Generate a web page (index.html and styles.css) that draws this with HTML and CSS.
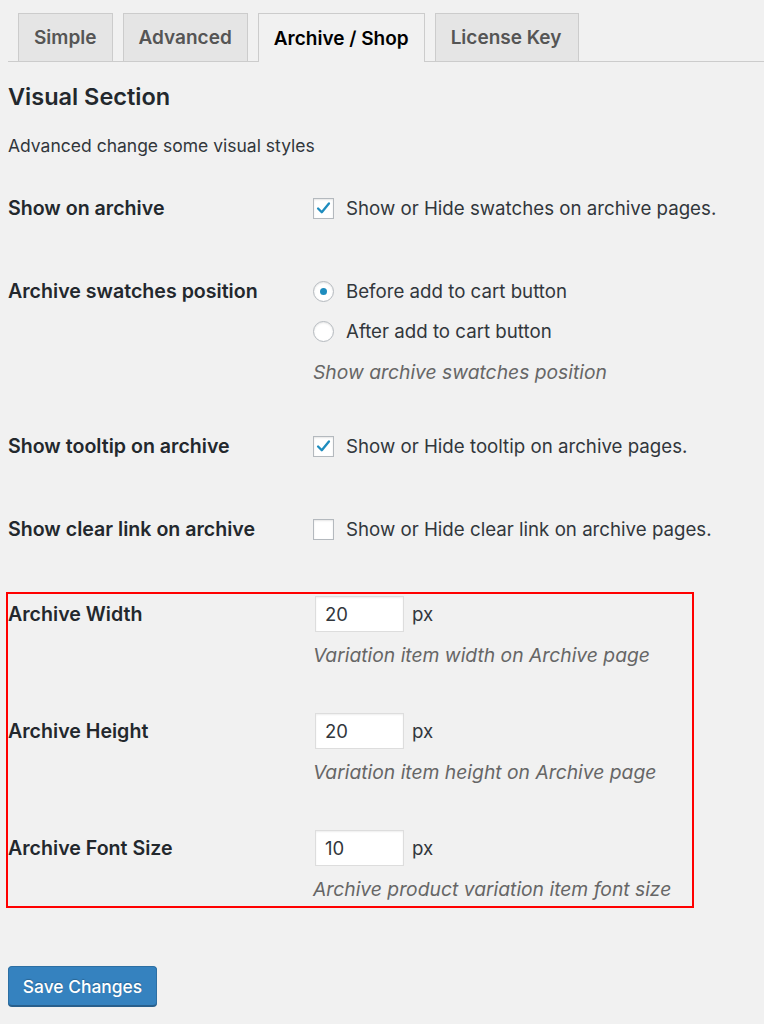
FILE: index.html
```html
<!DOCTYPE html>
<html>
<head>
<meta charset="utf-8">
<link rel="stylesheet" href="styles.css">
</head>
<body>
<div class="page">
  <nav class="tabs">
    <a class="tab">Simple</a>
    <a class="tab">Advanced</a>
    <a class="tab active">Archive / Shop</a>
    <a class="tab">License Key</a>
  </nav>
  <h2 class="title">Visual Section</h2>
  <p class="intro">Advanced change some visual styles</p>

  <div class="rows">
    <div class="row">
      <div class="label">Show on archive</div>
      <div class="control">
        <div class="line"><span class="check on"><svg viewBox="0 0 21 21"><path d="M4.5 10.5 L8.6 14.6 L16.5 5" fill="none" stroke="#1e8cbe" stroke-width="2.6" stroke-linecap="round" stroke-linejoin="round"/></svg></span>Show or Hide swatches on archive pages.</div>
      </div>
    </div>
    <div class="row">
      <div class="label">Archive swatches position</div>
      <div class="control">
        <div class="line"><span class="radio on"></span>Before add to cart button</div>
        <div class="line"><span class="radio"></span>After add to cart button</div>
        <div class="desc">Show archive swatches position</div>
      </div>
    </div>
    <div class="row">
      <div class="label">Show tooltip on archive</div>
      <div class="control">
        <div class="line"><span class="check on"><svg viewBox="0 0 21 21"><path d="M4.5 10.5 L8.6 14.6 L16.5 5" fill="none" stroke="#1e8cbe" stroke-width="2.6" stroke-linecap="round" stroke-linejoin="round"/></svg></span>Show or Hide tooltip on archive pages.</div>
      </div>
    </div>
    <div class="row">
      <div class="label">Show clear link on archive</div>
      <div class="control">
        <div class="line"><span class="check"></span>Show or Hide clear link on archive pages.</div>
      </div>
    </div>

    <div class="highlight">
      <div class="row">
        <div class="label">Archive Width</div>
        <div class="control">
          <div class="line"><span class="field">20</span><span class="unit">px</span></div>
          <div class="desc">Variation item width on Archive page</div>
        </div>
      </div>
      <div class="row">
        <div class="label">Archive Height</div>
        <div class="control">
          <div class="line"><span class="field">20</span><span class="unit">px</span></div>
          <div class="desc">Variation item height on Archive page</div>
        </div>
      </div>
      <div class="row">
        <div class="label">Archive Font Size</div>
        <div class="control">
          <div class="line"><span class="field">10</span><span class="unit">px</span></div>
          <div class="desc">Archive product variation item font size</div>
        </div>
      </div>
    </div>
  </div>

  <button class="save">Save Changes</button>
</div>
</body>
</html>
```

FILE: styles.css
```css
* { box-sizing: border-box; }
html, body { margin: 0; padding: 0; }
body {
  background: #f1f1f1;
  color: #23282d;
  font-family: Inter, "Liberation Sans", sans-serif;
  font-size: 17px;
  width: 764px;
  height: 1024px;
  overflow: hidden;
}
.page { padding: 13px 0 0 8px; }

.tabs {
  display: flex;
  gap: 10px;
  padding-left: 10px;
  border-bottom: 1px solid #ccc;
  height: 49px;
}
.tab {
  display: flex;
  align-items: center;
  height: 48px;
  padding: 0 15px;
  border: 1px solid #ccc;
  border-bottom: none;
  background: #e5e5e5;
  color: #555;
  font-weight: 600;
  font-size: 19px;
}
.tab.active {
  background: #f1f1f1;
  color: #000;
  height: 49px;
}
.tab:last-child { padding-right: 17px; }

.title {
  margin: 20px 0 0;
  font-size: 23.5px;
  line-height: 30px;
  font-weight: 600;
  color: #23282d;
}
.intro {
  margin: 22px 0 0;
  line-height: 24px;
  font-size: 17.5px;
  color: #32373c;
}

.rows {
  display: flex;
  flex-direction: column;
  gap: 43px;
  margin-top: 30px;
}
.row {
  display: grid;
  grid-template-columns: 305px 1fr;
}
.label {
  font-weight: 600;
  line-height: 40px;
  font-size: 19.6px;
  color: #23282d;
}
.control { display: flex; flex-direction: column; }
.line {
  height: 40px;
  display: flex;
  align-items: center;
  color: #32373c;
  font-size: 18.7px;
}
.desc {
  margin-top: 10px;
  line-height: 22px;
  font-style: italic;
  color: #666;
  font-size: 19.3px;
}

.check {
  width: 21px;
  height: 21px;
  border: 1px solid #b4b9be;
  background: #fff;
  box-shadow: inset 0 1px 2px rgba(0,0,0,0.1);
  margin-right: 12px;
  display: inline-block;
  flex: none;
}
.check svg { display: block; width: 19px; height: 19px; }
.radio {
  width: 21px;
  height: 21px;
  border: 1px solid #b4b9be;
  border-radius: 50%;
  background: #fff;
  box-shadow: inset 0 1px 2px rgba(0,0,0,0.1);
  margin-right: 12px;
  display: flex;
  align-items: center;
  justify-content: center;
  flex: none;
}
.radio.on::after {
  content: "";
  width: 7px;
  height: 7px;
  border-radius: 50%;
  background: #1e8cbe;
}

.highlight {
  display: flex;
  flex-direction: column;
  gap: 45px;
  width: 688px;
  margin-left: -2px;
  border: 2px solid #f00;
  padding-bottom: 6px;
}
.field {
  width: 89px;
  height: 36px;
  margin-left: 2px;
  background: #fff;
  border: 1px solid #ddd;
  box-shadow: inset 0 1px 2px rgba(0,0,0,0.07);
  display: flex;
  align-items: center;
  padding-left: 9px;
  font-size: 18.5px;
  color: #32373c;
}
.unit { margin-left: 8px; color: #32373c; }

.save {
  display: block;
  margin-top: 58px;
  width: 149px;
  height: 40px;
  background: #3582bf;
  border: 1px solid #2d6fa3;
  border-bottom-color: #285f8c;
  border-radius: 4px;
  box-shadow: 0 1px 0 #285f8c;
  color: #fff;
  font-family: Inter, "Liberation Sans", sans-serif;
  font-size: 17.4px;
  font-weight: 500;
  padding: 0;
  text-shadow: 0 -1px 1px #2a6694;
}
```
